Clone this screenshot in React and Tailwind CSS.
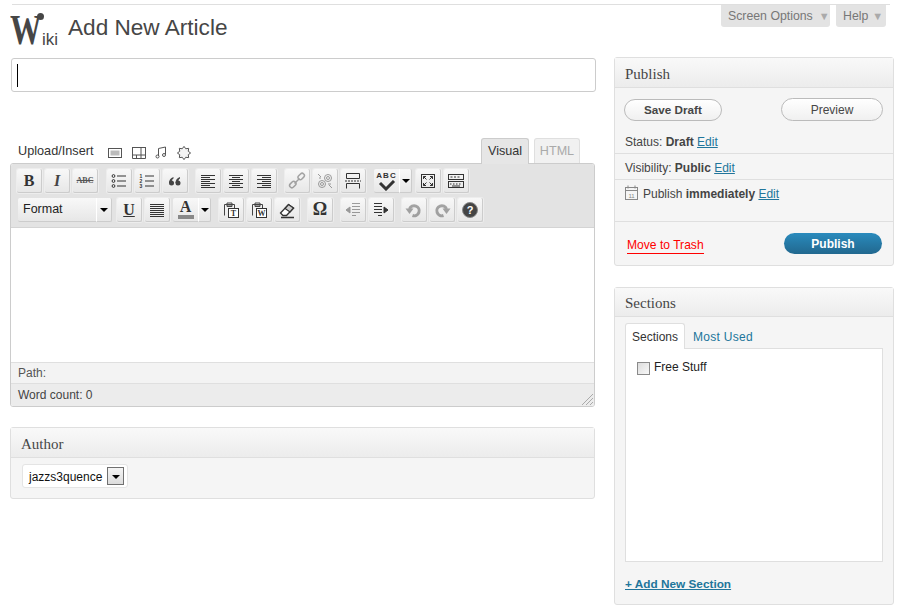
const Btn = ({ children, dim }) => (
  <div className="w-[25px] h-[24px] flex items-center justify-center rounded-[2px] bg-linear-to-b from-[#f8f8f8] to-[#e7e7e7] border-r border-b border-[#cccccc] shadow-[0_0_0_1px_#ededed]">
    <div className={`flex items-center justify-center ${dim ? 'opacity-45' : ''}`}>{children}</div>
  </div>
);

const Arrow = () => (
  <div className="w-[13px] h-[24px] flex items-center justify-center rounded-r-[2px] bg-linear-to-b from-[#f8f8f8] to-[#e7e7e7] border-r border-b border-[#cccccc] border-l border-l-white">
    <span className="w-0 h-0 border-x-[4px] border-x-transparent border-t-[4px] border-t-black" />
  </div>
);

const Ico = ({ children }) => (
  <svg width="18" height="18" viewBox="0 0 18 18" fill="none" stroke="#333" strokeWidth="1">{children}</svg>
);

const Lines = ({ rows }) => (
  <Ico>
    {rows.map(([x1, x2], i) => (
      <line key={i} x1={x1} x2={x2} y1={3.5 + i * 2} y2={3.5 + i * 2} />
    ))}
  </Ico>
);

const alignLeft = [[2, 16], [2, 11], [2, 16], [2, 11], [2, 16], [2, 11], [2, 16]];
const alignCenter = [[2, 16], [5, 13], [2, 16], [5, 13], [2, 16], [5, 13], [2, 16]];
const alignRight = [[2, 16], [7, 16], [2, 16], [7, 16], [2, 16], [7, 16], [2, 16]];
const justify = [[2, 16], [2, 16], [2, 16], [2, 16], [2, 16], [2, 16], [2, 16]];

// spiky gear for the "add media" icon
const gear = Array.from({ length: 16 }, (_, i) => {
  const r = i % 2 ? 4.6 : 6.6;
  const a = (i * Math.PI) / 8;
  return `${(7 + r * Math.sin(a)).toFixed(2)},${(7 - r * Math.cos(a)).toFixed(2)}`;
}).join(' ');

const Clip = ({ letter }) => (
  <Ico>
    <path d="M2.500 14.500V3.500h2.500V2h5v1.500h2.500V7" stroke="#444" />
    <path d="M5 3.500h5v2H5z" fill="#999" stroke="#444" />
    <rect x="6.500" y="7.500" width="10" height="9" fill="#fff" stroke="#333" />
    <text x="11.500" y="15" fontSize="8" fontWeight="700" textAnchor="middle" fill="#333" stroke="none" fontFamily="Liberation Serif">{letter}</text>
  </Ico>
);

const Panel = ({ title, children, className, head = 'h-[30px] pt-[4px]' }) => (
  <div className={`border border-[#dfdfdf] rounded-[3px] bg-[#f5f5f5] ${className}`}>
    <h3 className={`${head} flex items-center px-[10px] font-['Liberation_Serif'] text-[15px] text-[#464646] bg-linear-to-b from-[#f9f9f9] to-[#ececec] border-b border-[#dfdfdf]`}>{title}</h3>
    {children}
  </div>
);

const EditLink = () => <a className="text-[#21759b] underline">Edit</a>;

export default function App() {
  return (
    <div className="w-[904px] h-[613px] overflow-hidden bg-white font-['Liberation_Sans',sans-serif] text-[12px] text-[#333]">
      {/* Header */}
      <div className="mt-[4px] ml-[12px] w-[878px] h-[53px] border-t border-[#dfdfdf] flex items-start">
        <div className="relative -ml-[2px] mt-[7px] w-[48px] h-[36px] flex items-end text-[#464646]">
          <span className="w-[32px] origin-left scale-x-75 font-['Liberation_Serif'] font-bold text-[42px] leading-[36px]">W</span>
          <span className="text-[17px] leading-[16px] font-['Liberation_Sans']">iki</span>
          <span className="absolute left-[27px] top-[1px] w-[7px] h-[7px] rounded-full bg-[#464646]" />
        </div>
        <h1 className="ml-[10px] mt-[6px] text-[22.6px] leading-[34px] text-[#464646]">Add New Article</h1>
        <div className="ml-auto mr-[4px] flex gap-[6px]">
          <div className="w-[109px] h-[22px] flex items-center pl-[7px] gap-[6px] rounded-b-[3px] bg-[#e3e3e3] text-[12.3px] text-[#777]">
            Screen Options <span className="text-[#aaa] text-[11px]">▼</span>
          </div>
          <div className="w-[50px] h-[22px] flex items-center pl-[7px] gap-[4px] rounded-b-[3px] bg-[#e3e3e3] text-[12.3px] text-[#777]">
            Help <span className="text-[#aaa] text-[11px]">▼</span>
          </div>
        </div>
      </div>

      <div className="flex pl-[10px] gap-[19px]">
        {/* Left column */}
        <div className="w-[585px] pt-[1px]">
          <div className="ml-[1px] -mr-[1px] h-[34px] border border-[#cccccc] rounded-[3px] flex items-center pl-[5px]">
            <span className="w-px h-[23px] bg-black" />
          </div>

          <div className="mt-[46px] h-[25px] flex items-end pl-[8px]">
            <div className="flex items-center h-[25px] pt-[2px]">
              <span className="text-[12.7px] text-[#333]">Upload/Insert</span>
              <svg className="ml-[15px] mt-[2px]" width="14" height="12" viewBox="0 0 14 12"><rect x=".5" y="1.500" width="13" height="9" fill="#fff" stroke="#555" /><rect x="2.500" y="3.500" width="9" height="5" fill="#bbb" /></svg>
              <svg className="ml-[10px] mt-[2px]" width="14" height="12" viewBox="0 0 14 12" fill="none" stroke="#555"><rect x=".5" y=".5" width="13" height="7.500" /><path d="M9 .5v7.500M.5 8v3.500h13V8M4.500 8v3.500M9 8v3.500" /></svg>
              <svg className="ml-[9px] mt-[2px]" width="13" height="13" viewBox="0 0 13 13" fill="none" stroke="#555"><path d="M3.500 10V2.500l7-1.500v7.500" /><circle cx="2.500" cy="10.500" r="1.500" /><circle cx="9" cy="9" r="1.500" /></svg>
              <svg className="ml-[9px] mt-[2px]" width="14" height="14" viewBox="0 0 14 14" fill="#f4f4f4" stroke="#555"><polygon points={gear} /></svg>
            </div>
            <div className="ml-auto flex items-end gap-[5px] pr-[15px]">
              <div className="w-[48px] h-[26px] -mb-px z-10 flex items-center justify-center bg-[#e6e6e6] border border-b-0 border-[#cccccc] rounded-t-[3px] text-[12.6px] text-[#333]">Visual</div>
              <div className="w-[46px] h-[25px] flex items-center justify-center bg-[#f1f1f1] border border-b-0 border-[#dfdfdf] rounded-t-[3px] text-[12.6px] text-[#aaaaaa]">HTML</div>
            </div>
          </div>

          {/* Editor */}
          <div className="border border-[#cccccc] rounded-[3px] overflow-hidden">
            <div className="h-[64px] bg-[#e3e3e3] border-b border-[#d4d4d4] pl-[6px] pt-[5px] flex flex-col gap-[5px]">
              <div className="flex">
                <div className="flex gap-[3px]">
                  <Btn><span className="font-['Liberation_Serif'] font-bold text-[16px] text-[#333]">B</span></Btn>
                  <Btn><span className="font-['Liberation_Serif'] italic font-bold text-[16px] text-[#444]">I</span></Btn>
                  <Btn><span className="font-['Liberation_Serif'] font-bold text-[8px] text-[#555] line-through">ABC</span></Btn>
                </div>
                <div className="flex gap-[3px] ml-[9px]">
                  <Btn><Ico><circle cx="3.500" cy="4" r="1.400" /><circle cx="3.500" cy="9" r="1.400" /><circle cx="3.500" cy="14" r="1.400" /><path d="M7 4h9M7 9h9M7 14h9" /></Ico></Btn>
                  <Btn><Ico><text x="1.500" y="6" fontSize="5" fontWeight="700" fill="#333" stroke="none">1</text><text x="1.500" y="11" fontSize="5" fontWeight="700" fill="#333" stroke="none">2</text><text x="1.500" y="16" fontSize="5" fontWeight="700" fill="#333" stroke="none">3</text><path d="M7 4h9M7 9h9M7 14h9" /></Ico></Btn>
                  <Btn><Ico><g fill="#444" stroke="none"><circle cx="5.500" cy="11" r="2.500" /><path d="M3 11c0-3 1.500-5 4.500-6v1.500C6 7.500 5.500 9 5.500 11z" /><circle cx="12" cy="11" r="2.500" /><path d="M9.500 11c0-3 1.500-5 4.500-6v1.500c-1.500 1-2 2.500-2 4.500z" /></g></Ico></Btn>
                </div>
                <div className="flex gap-[3px] ml-[8px]">
                  <Btn><Lines rows={alignLeft} /></Btn>
                  <Btn><Lines rows={alignCenter} /></Btn>
                  <Btn><Lines rows={alignRight} /></Btn>
                </div>
                <div className="flex gap-[3px] ml-[8px]">
                  <Btn dim><Ico><g strokeWidth="1.500" stroke="#444"><rect x="9" y="1.500" width="7" height="4.500" rx="2.200" transform="rotate(-45 12.500 3.750) translate(0 1)" /><rect x="2" y="11" width="7" height="4.500" rx="2.200" transform="rotate(-45 5.500 13.250) translate(0 -1)" /><path d="M6.500 11.500l5-5" /></g></Ico></Btn>
                  <Btn dim><Ico><circle cx="12" cy="6" r="3.500" /><circle cx="6" cy="12" r="3.500" /><circle cx="12" cy="6" r="1.500" /><circle cx="6" cy="12" r="1.500" /><path d="M2 2l3 3M13 13l3 3M3 6h2M12 12h3" /></Ico></Btn>
                  <Btn><Ico><path d="M2.500 6.500v-5h13v5zM2.500 11.500v5M15.500 11.500v5M2.500 11.500h13" /><path d="M1 9h16" strokeDasharray="2 1" /></Ico></Btn>
                </div>
                <div className="flex ml-[8px]">
                  <div className="w-[25px] h-[24px] flex flex-col items-center justify-center rounded-l-[2px] bg-linear-to-b from-[#f8f8f8] to-[#e7e7e7] border-b border-[#cccccc]">
                    <span className="text-[8px] leading-[9px] font-bold tracking-[1px] text-[#333]">ABC</span>
                    <svg width="18" height="11" viewBox="0 0 18 11" fill="none" stroke="#333" strokeWidth="3"><path d="M2 3l6 6 8-8" /></svg>
                  </div>
                  <Arrow />
                </div>
                <div className="flex gap-[3px] ml-[4px]">
                  <Btn><Ico><rect x="2.500" y="2.500" width="13" height="13" /><path d="M4.500 4.500l3 3M4.500 4.500h2.500M4.500 4.500v2.500M13.500 4.500l-3 3M13.500 4.500h-2.500M13.500 4.500v2.500M4.500 13.500l3-3M4.500 13.500h2.500M4.500 13.500v-2.500M13.500 13.500l-3-3M13.500 13.500h-2.500M13.500 13.500v-2.500" /></Ico></Btn>
                  <Btn><Ico><rect x="1.500" y="2.500" width="15" height="5" /><rect x="1.500" y="9.500" width="15" height="6" /><path d="M3.500 5h2M7 5h2M10.500 5h2M3 12h1.500M6 12h1.500M9 12h1.500M12 12h1.500M5 14h8" /></Ico></Btn>
                </div>
              </div>
              <div className="flex">
                <div className="flex ml-[1px]">
                  <div className="w-[78px] h-[24px] flex items-center pl-[5px] pb-[1px] rounded-l-[2px] bg-linear-to-b from-[#f8f8f8] to-[#e7e7e7] border-b border-[#cccccc] text-[12.500px] text-[#222]">Format</div>
                  <div className="w-[16px] h-[24px] flex items-center justify-center rounded-r-[2px] bg-linear-to-b from-[#f8f8f8] to-[#e7e7e7] border-r border-b border-[#cccccc] border-l border-l-white">
                    <span className="w-0 h-0 border-x-[4px] border-x-transparent border-t-[4px] border-t-black" />
                  </div>
                </div>
                <div className="flex gap-[3px] ml-[5px]">
                  <Btn><span className="font-['Liberation_Serif'] font-bold text-[16px] text-[#333] underline">U</span></Btn>
                  <Btn><Lines rows={justify} /></Btn>
                </div>
                <div className="flex ml-[3px]">
                  <div className="w-[25px] h-[24px] flex flex-col items-center rounded-l-[2px] bg-linear-to-b from-[#f8f8f8] to-[#e7e7e7] border-b border-[#cccccc]">
                    <span className="font-['Liberation_Serif'] font-bold text-[16px] leading-[17px] text-[#333]">A</span>
                    <span className="w-[16px] h-[4px] bg-[#888]" />
                  </div>
                  <Arrow />
                </div>
                <div className="flex gap-[3px] ml-[8px]">
                  <Btn><Clip letter="T" /></Btn>
                  <Btn><Clip letter="W" /></Btn>
                  <Btn><Ico><path d="M2.500 12L10.500 3.500l5 3.500-7 7.500H5z" fill="#fff" strokeWidth="1.300" /><path d="M10.500 3.500l5 3.500-3.500 4-5-3.500z" fill="#ccc" strokeWidth="1.300" /><path d="M3 16.500h13" strokeWidth="1.600" /></Ico></Btn>
                </div>
                <div className="flex ml-[8px]">
                  <Btn><span className="font-['Liberation_Serif'] font-bold text-[18px] text-[#333]">Ω</span></Btn>
                </div>
                <div className="flex gap-[3px] ml-[8px]">
                  <Btn dim><Ico><path d="M8 2.500h8M8 5.500h8M8 8.500h8M8 11.500h8M8 14.500h4" /><path d="M6 6L2 9l4 3z" fill="#333" /></Ico></Btn>
                  <Btn><Ico><path d="M2 2.500h8M2 5.500h8M2 8.500h8M2 11.500h8M6 14.500h4" /><path d="M12 6l4 3-4 3z" fill="#333" /></Ico></Btn>
                </div>
                <div className="flex gap-[3px] ml-[8px]">
                  <Btn dim><Ico><path d="M4.500 8a5 5 0 1 1 3 6.500" strokeWidth="3" stroke="#444" /><path d="M.5 7.500h8L4.500 13z" fill="#444" stroke="none" /></Ico></Btn>
                  <Btn dim><Ico><path d="M13.500 8a5 5 0 1 0-3 6.500" strokeWidth="3" stroke="#444" /><path d="M17.500 7.500h-8l4 5.500z" fill="#444" stroke="none" /></Ico></Btn>
                  <Btn><Ico><circle cx="9" cy="9" r="7.500" fill="#444" stroke="#888" /><text x="9" y="13" fontSize="11" fontWeight="700" textAnchor="middle" fill="#fff" stroke="none">?</text></Ico></Btn>
                </div>
              </div>
            </div>
            <div className="h-[135px] bg-white border-b border-[#dfdfdf]" />
            <div className="h-[21px] bg-[#f3f3f3] border-b border-[#dfdfdf] flex items-center pl-[7px] text-[#555]">Path:</div>
            <div className="relative h-[22px] bg-[#ececec] flex items-center pl-[7px] text-[#444]">
              Word count: 0
              <svg className="absolute right-[1px] bottom-[1px]" width="12" height="12" viewBox="0 0 12 12" stroke="#aaa"><path d="M1 12L12 1M5 12l7-7M9 12l3-3" /></svg>
            </div>
          </div>

          <Panel title="Author" className="mt-[20px] h-[72px]">
            <div className="pt-[6px] pl-[11px]">
              <div className="w-[106px] h-[24px] flex items-center pl-[6px] pt-[1px] bg-white border border-[#e4e4e4] rounded-[3px] text-[#111]">
                jazzs3quence
                <span className="ml-[5px] -mt-[1px] w-[17px] h-[18px] flex items-center justify-center bg-linear-to-b from-[#f4f4f4] to-[#dcdcdc] border border-[#707070]">
                  <span className="w-0 h-0 mt-[1px] border-x-[4px] border-x-transparent border-t-[4px] border-t-black" />
                </span>
              </div>
            </div>
          </Panel>
        </div>

        {/* Right column */}
        <div className="w-[280px]">
          <Panel title="Publish" className="h-[209px] flex flex-col">
            <div className="h-[34px] pt-[11px] pl-[9px] pr-[10px] flex items-start justify-between">
              <div className="w-[98px] h-[22px] flex items-center justify-center rounded-full border border-[#bbbbbb] bg-linear-to-b from-white to-[#f0f0f0] font-bold text-[11.700px] text-[#464646]">Save Draft</div>
              <div className="w-[102px] h-[23px] -mt-[1px] flex items-center justify-center rounded-full border border-[#bbbbbb] bg-linear-to-b from-white to-[#f0f0f0] text-[#464646]">Preview</div>
            </div>
            <div className="h-[32px] pt-[9px] leading-[22px] px-[10px] border-b border-[#dfdfdf] text-[#444]">
              Status: <b>Draft</b> <EditLink />
            </div>
            <div className="h-[26px] flex items-center pt-[2px] px-[10px] border-b border-[#dfdfdf] text-[#444]">
              <span>Visibility: <b>Public</b> <EditLink /></span>
            </div>
            <div className="h-[42px] pt-[5px] px-[10px] flex items-start gap-[5px] border-b border-[#dfdfdf] text-[#444]">
              <svg width="13" height="15" viewBox="0 0 13 15" fill="none" stroke="#888"><rect x=".5" y="2.500" width="12" height="12" /><path d="M.5 5.500h12M3 .5v3M10 .5v3" /><text x="6.500" y="12.500" fontSize="6" textAnchor="middle" fill="#888" stroke="none">11</text></svg>
              <span>Publish <b>immediately</b> <EditLink /></span>
            </div>
            <div className="flex-1 flex items-center justify-between pl-[12px] pr-[11px]">
              <a className="mt-[5px] text-[#ff0000] border-b border-[#ff0000] pb-[1px] leading-[14px] text-[12.100px]">Move to Trash</a>
              <div className="w-[98px] h-[21px] flex items-center justify-center rounded-full bg-linear-to-b from-[#2a8bbd] to-[#21688f] font-bold text-white">Publish</div>
            </div>
          </Panel>

          <Panel title="Sections" head="h-[29px] pt-[3px]" className="mt-[21px] h-[318px]">
            <div className="pt-[6px] px-[10px]">
              <div className="flex h-[25px] items-end">
                <div className="w-[60px] h-[26px] -mb-px z-10 flex items-center justify-center pt-[1px] bg-white border border-b-0 border-[#dfdfdf] rounded-t-[3px] text-[#333]">Sections</div>
                <div className="ml-[8px] h-[25px] pt-[2px] flex items-center text-[#21759b] tracking-[0.3px]">Most Used</div>
              </div>
              <div className="h-[214px] bg-white border border-[#dfdfdf] pt-[11px] pl-[11px] flex items-start gap-[4px]">
                <span className="mt-[2px] w-[13px] h-[13px] border border-[#8a8a8a] bg-linear-to-br from-[#dcdcdc] to-[#f8f8f8]" />
                <span className="text-[#222] leading-[14px]">Free Stuff</span>
              </div>
              <a className="block mt-[14px] font-bold text-[11.800px] text-[#21759b] underline">+ Add New Section</a>
            </div>
          </Panel>
        </div>
      </div>
    </div>
  );
}
